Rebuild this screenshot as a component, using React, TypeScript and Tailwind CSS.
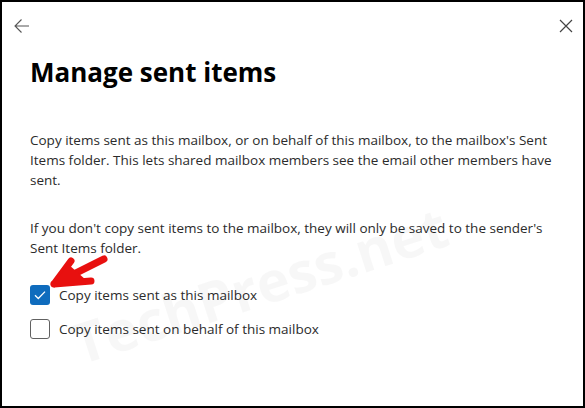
const font = "font-['Segoe_UI','Open_Sans','Noto_Sans',sans-serif]";

function BackIcon() {
  return (
    <svg width="18" height="18" viewBox="0 0 18 18" fill="none" stroke="#555" strokeWidth="1.1">
      <path d="M16 9H2.5M8.5 2.5L2 9l6.5 6.5" />
    </svg>
  );
}

function CloseIcon() {
  return (
    <svg width="14" height="14" viewBox="0 0 14 14" fill="none" stroke="#444" strokeWidth="1.2">
      <path d="M1 1l12 12M13 1L1 13" />
    </svg>
  );
}

function Checkbox({ checked }: { checked?: boolean }) {
  if (checked) {
    return (
      <span className="flex h-5 w-5 shrink-0 items-center justify-center rounded-[3px] bg-[#0f6cbd]">
        <svg width="12" height="10" viewBox="0 0 12 10" fill="none" stroke="white" strokeWidth="1.3">
          <path d="M1 5.2l3.3 3.3L11 1.6" />
        </svg>
      </span>
    );
  }
  return <span className="h-5 w-5 shrink-0 rounded-[3px] border border-[#616161] bg-white" />;
}

export default function App() {
  return (
    <div className={`relative h-[408px] w-[585px] overflow-hidden border-2 border-black bg-white text-[#2b2b2b] ${font}`}>
      {/* header */}
      <div className="flex items-center justify-between pl-[11px] pr-[10px] pt-[15px]">
        <BackIcon />
        <CloseIcon />
      </div>

      <div className="pl-[28px] pr-[24px]">
        <h1 className="mt-[21px] text-[26px] font-bold leading-[32px] text-black">Manage sent items</h1>

        <p className="mt-[42px] text-[13.5px] leading-[20px]">
          Copy items sent as this mailbox, or on behalf of this mailbox, to the mailbox's Sent Items folder. This lets
          shared mailbox members see the email other members have sent.
        </p>
        <p className="mt-[28px] text-[13.5px] leading-[20px]">
          If you don't copy sent items to the mailbox, they will only be saved to the sender's Sent Items folder.
        </p>

        <div className="mt-[27px] flex flex-col gap-[14px] text-[13.5px]">
          <label className="flex items-center gap-[9px]">
            <Checkbox checked />
            <span>Copy items sent as this mailbox</span>
          </label>
          <label className="flex items-center gap-[9px]">
            <Checkbox />
            <span>Copy items sent on behalf of this mailbox</span>
          </label>
        </div>
      </div>

      {/* watermark */}
      <div className="pointer-events-none absolute left-[62px] top-[240px] -rotate-[18deg] select-none text-[56px] font-bold text-black/[0.03]">
        TechPress.net
      </div>

      {/* red annotation arrow */}
      <svg className="pointer-events-none absolute left-0 top-0" width="585" height="408" fill="none">
        <path
          d="M52 282L102 257M52 282L69 259M52 282L89 279"
          stroke="#e8100f"
          strokeWidth="7"
          strokeLinecap="round"
          strokeLinejoin="round"
        />
        <path d="M52 282L66 262L84 278Z" fill="#e8100f" />
      </svg>
    </div>
  );
}
